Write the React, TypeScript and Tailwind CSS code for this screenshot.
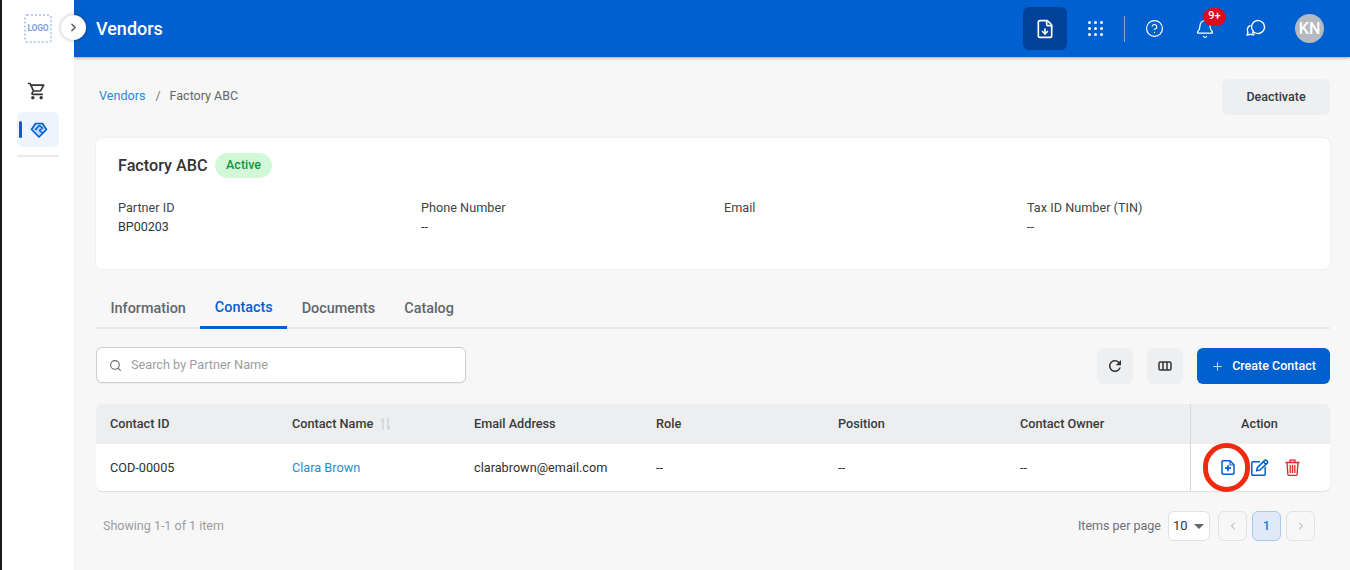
import { ChevronLeft, ChevronRight, FileDown, HelpCircle, Bell, Plus, Search } from "lucide-react";

const infoFields = [
  { label: "Partner ID", value: "BP00203" },
  { label: "Phone Number", value: "--" },
  { label: "Email", value: "" },
  { label: "Tax ID Number (TIN)", value: "--" },
];

const tabs = [
  { label: "Information", active: false },
  { label: "Contacts", active: true },
  { label: "Documents", active: false },
  { label: "Catalog", active: false },
];

function HandshakeIcon() {
  return (
    <svg width="18" height="16" viewBox="0 0 18 16" fill="none">
      <path d="M9 15 1.5 7.5 5.5 1.5h7l4 6L9 15Z" fill="#bcd4f5" stroke="#0060cf" strokeWidth="1.6" strokeLinejoin="round" />
      <path d="M5 8 9.5 3.5 12.5 6 9.5 8.5l3 2.5" stroke="#0060cf" strokeWidth="1.6" strokeLinejoin="round" />
    </svg>
  );
}

function CartIcon() {
  return (
    <svg width="20" height="20" viewBox="0 0 24 24" fill="#333">
      <path d="M15.55 13c.75 0 1.41-.41 1.75-1.03l3.58-6.49c.37-.66-.11-1.48-.87-1.48H5.21l-.94-2H1v2h2l3.6 7.59-1.35 2.44C4.52 15.37 5.48 17 7 17h12v-2H7l1.1-2h7.45zM6.16 6h12.15l-2.76 5H8.53L6.16 6zM7 18c-1.1 0-1.99.9-1.99 2S5.9 22 7 22s2-.9 2-2-.9-2-2-2zm10 0c-1.1 0-1.99.9-1.99 2s.89 2 1.99 2 2-.9 2-2-.9-2-2-2z" />
    </svg>
  );
}

function DotsIcon() {
  const spots = [1.5, 7.5, 13.5];
  return (
    <svg width="15" height="15" viewBox="0 0 15 15" fill="white">
      {spots.map((y) => spots.map((x) => <circle key={`${x}-${y}`} cx={x} cy={y} r="1.5" />))}
    </svg>
  );
}

function ChatIcon() {
  return (
    <svg width="20" height="20" viewBox="0 0 20 20" fill="none" stroke="white" strokeWidth="1.4">
      <path d="M5.5 8a6.5 6.5 0 1 1 3 5.5l-1.7.3.4-1.8A6.5 6.5 0 0 1 5.5 8Z" />
      <path d="M4.5 6.5a4.5 4.5 0 0 0-2.6 6.6l-.7 2.9 3-.8a4.5 4.5 0 0 0 4.3.2" />
    </svg>
  );
}

function RefreshIcon() {
  return (
    <svg width="18" height="18" viewBox="0 0 24 24" fill="#333">
      <path d="M17.65 6.35A7.958 7.958 0 0 0 12 4c-4.42 0-7.99 3.58-7.99 8s3.57 8 7.99 8c3.73 0 6.84-2.55 7.73-6h-2.08A5.99 5.99 0 0 1 12 18c-3.31 0-6-2.69-6-6s2.69-6 6-6c1.66 0 3.14.69 4.22 1.78L13 11h7V4l-2.35 2.35z" />
    </svg>
  );
}

function ColumnsIcon() {
  return (
    <svg width="14" height="10" viewBox="0 0 14 10" fill="none" stroke="#333" strokeWidth="1.5">
      <rect x="1" y="1" width="12" height="8" rx="1.5" />
      <path d="M5 1v8M9 1v8" />
    </svg>
  );
}

function FilePlusIcon() {
  return (
    <svg width="14" height="15" viewBox="0 0 14 15" fill="none" stroke="#0060cf" strokeWidth="1.5">
      <path d="M1 1.8a1 1 0 0 1 1-1h7l4 4v8.4a1 1 0 0 1-1 1H2a1 1 0 0 1-1-1V1.8Z" strokeLinejoin="round" />
      <path d="M9 1v4h4" strokeWidth="1.2" />
      <path d="M7 5.2v6M4 8.2h6" strokeWidth="1.7" />
    </svg>
  );
}

function EditIcon() {
  return (
    <svg width="18" height="17" viewBox="0 0 18 17" fill="none" stroke="#0060cf" strokeWidth="1.5">
      <path d="M9 2.8H1.8a1 1 0 0 0-1 1v11.4a1 1 0 0 0 1 1h11.4a1 1 0 0 0 1-1V8" />
      <path d="M5.5 11.8 6.4 8.6 13.6 1.4a1.2 1.2 0 0 1 1.7 0l1 1a1.2 1.2 0 0 1 0 1.7L9 11l-3.5.8Z" strokeLinejoin="round" />
      <path d="m12.4 2.8 2.6 2.6" />
    </svg>
  );
}

function TrashIcon() {
  return (
    <svg width="15" height="17" viewBox="0 0 15 17" fill="none" stroke="#e5202e" strokeWidth="1.3">
      <path d="M.5 3.5h14M5 3.3V1.2h5v2.1" />
      <path d="M2 3.5l.9 12a.8.8 0 0 0 .8.8h7.6a.8.8 0 0 0 .8-.8l.9-12" />
      <path d="M5.2 6v8M7.5 6v8M9.8 6v8" />
    </svg>
  );
}

function SortIcon() {
  return (
    <svg width="11" height="12" viewBox="0 0 11 12" fill="none" stroke="#ccd0d4" strokeWidth="1.3">
      <path d="M3 12V1L1 3.5M8 0v11l2-2.5" />
    </svg>
  );
}

function Sidebar() {
  return (
    <aside className="w-[72px] shrink-0 bg-white flex flex-col items-center relative z-10">
      <div className="w-[28px] h-[29px] mt-[14px] border-2 border-dotted border-[#b9d0f3] rounded-[3px] flex items-center justify-center text-[8.5px] font-bold text-[#7f9fd6] tracking-tight">
        LOGO
      </div>
      <div className="mt-[38px] -ml-[2px]">
        <CartIcon />
      </div>
      <div className="w-[42px] h-[35px] mt-[11px] bg-[#edf4fe] rounded-[6px] flex items-center pl-[2px] gap-[8px]">
        <div className="w-[3px] h-[17px] bg-[#0060cf] rounded-full" />
        <HandshakeIcon />
      </div>
      <div className="w-[42px] h-[2px] mt-[8px] bg-[#ebebeb]" />
      <button className="absolute left-[59px] top-[15px] w-[25px] h-[25px] rounded-full bg-white shadow-[0_0_4px_rgba(0,0,0,0.3)] flex items-center justify-center text-[#555]">
        <ChevronRight size={13} strokeWidth={2.5} />
      </button>
    </aside>
  );
}

function Header() {
  return (
    <header className="h-[57px] shrink-0 bg-[#0060cf] shadow-[0_1px_3px_rgba(0,0,0,0.35)] flex items-center pl-[22px] pr-[26px] text-white">
      <h1 className="text-[18px] font-medium">Vendors</h1>
      <div className="ml-auto flex items-center">
        <div className="w-[44px] h-[43px] bg-[#004299] rounded-[6px] flex items-center justify-center">
          <FileDown size={20} strokeWidth={2} />
        </div>
        <div className="ml-[21px]">
          <DotsIcon />
        </div>
        <div className="w-px h-[26px] bg-[#7fa9de] ml-[21px]" />
        <HelpCircle size={19} strokeWidth={1.5} className="ml-[20px]" />
        <div className="relative ml-[31px] w-[20px] h-[20px]">
          <Bell size={20} strokeWidth={1.5} />
          <span className="absolute left-[8px] -top-[11px] w-[23px] h-[18px] rounded-full bg-[#dc0a1e] text-[11px] font-medium flex items-center justify-center">
            9+
          </span>
        </div>
        <div className="ml-[31px]">
          <ChatIcon />
        </div>
        <div className="ml-[29px] w-[29px] h-[29px] rounded-full bg-[#b5b9c0] text-[16px] font-medium flex items-center justify-center">
          KN
        </div>
      </div>
    </header>
  );
}

function InfoCard() {
  return (
    <section className="mt-[23px] h-[131px] bg-white rounded-[6px] shadow-[0_0_2px_rgba(0,0,0,0.12)] pl-[22px] pt-[14px]">
      <div className="flex items-center gap-[7.5px]">
        <h2 className="text-[16.2px] font-medium text-[#333] pt-[2px]">Factory ABC</h2>
        <span className="h-[25px] w-[57px] rounded-full bg-[#d3f8d8] text-[#12923f] text-[12.5px] font-medium flex items-center justify-center">
          Active
        </span>
      </div>
      <div className="grid grid-cols-[303px_303px_303px_250px] mt-[20px]">
        {infoFields.map((f) => (
          <div key={f.label}>
            <div className="text-[12.7px] leading-[19px] text-[#444]">{f.label}</div>
            <div className="text-[12.5px] leading-[19px] text-[#333]">{f.value}</div>
          </div>
        ))}
      </div>
    </section>
  );
}

function Tabs() {
  return (
    <div className="mt-[21px] h-[39px] border-b-2 border-[#e8e9ea] flex">
      {tabs.map((t) => (
        <div
          key={t.label}
          className={
            t.active
              ? "h-[39px] px-[14.5px] border-b-[3px] border-[#0060cf] text-[#0060cf] text-[14.4px] font-medium pt-[7px]"
              : "h-[39px] px-[14.5px] text-[#62666d] text-[14.4px] font-medium pt-[8px]"
          }
        >
          {t.label}
        </div>
      ))}
    </div>
  );
}

function Toolbar() {
  return (
    <div className="mt-[18px] h-[37px] flex items-start">
      <div className="w-[370px] h-[36px] bg-white border border-[#ccced1] rounded-[6px] flex items-center pl-[12px] gap-[9px] shadow-[0_1px_1px_rgba(0,0,0,0.05)]">
        <Search size={13} strokeWidth={2} className="text-[#666]" />
        <span className="text-[12.7px] text-[#9b9ea3]">Search by Partner Name</span>
      </div>
      <button className="ml-auto mt-px w-[36px] h-[36px] bg-[#eeeff1] rounded-[6px] flex items-center justify-center">
        <RefreshIcon />
      </button>
      <button className="ml-[14px] mt-px w-[36px] h-[36px] bg-[#eeeff1] rounded-[6px] flex items-center justify-center">
        <ColumnsIcon />
      </button>
      <button className="ml-[14px] mt-px w-[133px] h-[36px] bg-[#0060cf] rounded-[6px] flex items-center justify-center gap-[8px] text-white text-[12.5px] font-medium">
        <Plus size={13} strokeWidth={1.5} />
        Create Contact
      </button>
    </div>
  );
}

function ContactsTable() {
  const head = "h-[40px] bg-[#edeef0] px-[14px] flex items-center text-[12.7px] font-medium text-[#3a3a3a]";
  const cell = "h-[47px] px-[14px] pt-[1px] flex items-center text-[12.7px] text-[#2f2f2f]";
  return (
    <div className="mt-[20px] rounded-[6px] overflow-hidden bg-white shadow-[0_1px_1px_rgba(0,0,0,0.1)] grid grid-cols-[182px_182px_182px_182px_182px_184px_140px]">
      <div className={head}>Contact ID</div>
      <div className={`${head} gap-[7px]`}>
        Contact Name
        <SortIcon />
      </div>
      <div className={head}>Email Address</div>
      <div className={head}>Role</div>
      <div className={head}>Position</div>
      <div className={head}>Contact Owner</div>
      <div className={`${head} justify-center border-l border-[#d5d7da] pr-[16px]`}>Action</div>

      <div className={cell}>COD-00005</div>
      <div className="h-[47px] px-[14px] pt-[1px] flex items-center text-[12.7px] text-[#2a8ad2]">Clara Brown</div>
      <div className={cell}>clarabrown@email.com</div>
      <div className={cell}>--</div>
      <div className={cell}>--</div>
      <div className={cell}>--</div>
      <div className="h-[47px] border-l border-[#d5d7da] flex items-center pl-[30px]">
        <FilePlusIcon />
        <div className="ml-[16px]">
          <EditIcon />
        </div>
        <div className="ml-[16px]">
          <TrashIcon />
        </div>
      </div>
    </div>
  );
}

function Pagination() {
  return (
    <div className="mt-[20px] pl-[7px] pr-[15px] flex items-center">
      <span className="text-[12.5px] text-[#9a9da2]">Showing 1-1 of 1 item</span>
      <span className="ml-auto text-[12.5px] text-[#6d7076]">Items per page</span>
      <div className="ml-[7px] w-[42px] h-[30px] bg-white border border-[#e0e1e3] rounded-[6px] flex items-center pl-[4px] text-[13px] text-[#333]">
        10
        <span className="ml-[6px] w-0 h-0 border-x-[5px] border-x-transparent border-t-[5px] border-t-[#666]" />
      </div>
      <button className="ml-[8px] w-[29px] h-[30px] border border-[#e0e1e3] rounded-[6px] flex items-center justify-center text-[#a5a8ad]">
        <ChevronLeft size={12} strokeWidth={2} />
      </button>
      <button className="ml-[5px] w-[29px] h-[30px] bg-[#dfe9f7] border border-[#a9c8ef] rounded-[6px] text-[13px] font-medium text-[#2a7fd0]">
        1
      </button>
      <button className="ml-[5px] w-[29px] h-[30px] border border-[#e0e1e3] rounded-[6px] flex items-center justify-center text-[#a5a8ad]">
        <ChevronRight size={12} strokeWidth={2} />
      </button>
    </div>
  );
}

export default function App() {
  return (
    <div className="w-[1350px] h-[570px] overflow-hidden flex bg-[#f7f7f7] border-l-2 border-[#1c1c1c] font-['Roboto',sans-serif] relative">
      <Sidebar />
      <div className="flex-1 flex flex-col min-w-0">
        <Header />
        <main className="flex-1 pl-[22px] pr-[20px]">
          <div className="mt-[22px] h-[36px] flex items-center">
            <div className="mb-[2px] flex items-center">
              <span className="text-[12.6px] text-[#2a8ad2] ml-[3px]">Vendors</span>
              <span className="text-[12.5px] text-[#777] ml-[10px] mr-[9px]">/</span>
              <span className="text-[12.5px] text-[#666]">Factory ABC</span>
            </div>
            <button className="ml-auto w-[108px] h-[36px] bg-[#eeeff1] rounded-[6px] text-[12.5px] font-medium text-[#3a3a3a]">
              Deactivate
            </button>
          </div>
          <InfoCard />
          <Tabs />
          <Toolbar />
          <ContactsTable />
          <Pagination />
        </main>
      </div>
      {/* red annotation ring from the screenshot */}
      <div className="absolute left-[1201px] top-[443px] w-[47px] h-[49px] rounded-full border-[5px] border-[#ee2a10]" />
    </div>
  );
}
